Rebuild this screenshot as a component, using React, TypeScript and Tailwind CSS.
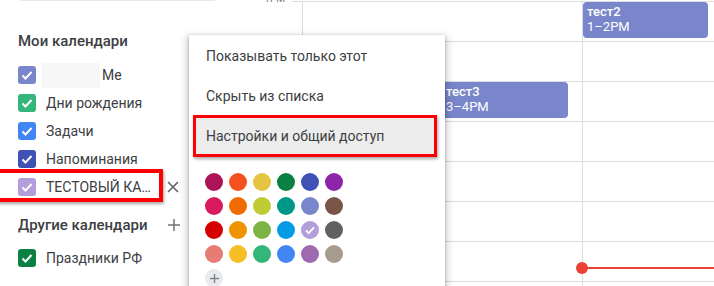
import React from "react";

const text = "text-[#3c4043]";

const Check = ({ className = "" }: { className?: string }) => (
  <svg viewBox="0 0 18 18" className={className}>
    <path d="M4.5 9.5l3 3 6-6.5" fill="none" stroke="#fff" strokeWidth="2" />
  </svg>
);

const CalBox = ({ color }: { color: string }) => (
  <div className={`w-[18px] h-[18px] rounded-[3px] flex items-center justify-center ${color}`}>
    <Check className="w-[18px] h-[18px]" />
  </div>
);

const CalRow = ({ color, children }: { color: string; children: React.ReactNode }) => (
  <div className="flex items-center h-[28px]">
    <CalBox color={color} />
    {children}
  </div>
);

const palette = [
  ["bg-[#ad1457]", "bg-[#f4511e]", "bg-[#e4c441]", "bg-[#0b8043]", "bg-[#3f51b5]", "bg-[#8e24aa]"],
  ["bg-[#d81b60]", "bg-[#ef6c00]", "bg-[#c0ca33]", "bg-[#009688]", "bg-[#7986cb]", "bg-[#795548]"],
  ["bg-[#d50000]", "bg-[#f09300]", "bg-[#7cb342]", "bg-[#039be5]", "bg-[#b39ddb]", "bg-[#616161]"],
  ["bg-[#e67c73]", "bg-[#f6bf26]", "bg-[#33b679]", "bg-[#4285f4]", "bg-[#9e69af]", "bg-[#a79b8e]"],
];

const Sidebar = () => (
  <div className="w-[256px] shrink-0 font-['Roboto',sans-serif]">
    <div className="ml-[20px] w-[195px] h-px bg-[#e8e8e8]" />
    <div className="pl-[18px]">
      <div className={`mt-[30px] h-[20px] leading-[20px] text-[15px] font-medium ${text}`}>
        Мои календари
      </div>
      <div className="mt-[10px]">
        <CalRow color="bg-[#7986cb]">
          <div className="ml-[6px] w-[58px] h-[25px] bg-[#f7f7f7]" />
          <span className={`ml-[2px] text-[14px] ${text}`}>Me</span>
        </CalRow>
        <CalRow color="bg-[#33b679]">
          <span className={`ml-[10px] text-[14px] ${text}`}>Дни рождения</span>
        </CalRow>
        <CalRow color="bg-[#4285f4]">
          <span className={`ml-[10px] text-[14px] ${text}`}>Задачи</span>
        </CalRow>
        <CalRow color="bg-[#3f51b5]">
          <span className={`ml-[10px] text-[14px] ${text}`}>Напоминания</span>
        </CalRow>
        <CalRow color="bg-[#b39ddb]">
          <span className={`ml-[10px] w-[113px] text-[14px] whitespace-nowrap ${text}`}>ТЕСТОВЫЙ КА…</span>
          <svg viewBox="0 0 12 12" className="ml-[8px] w-[12px] h-[12px]">
            <path d="M1 1l10 10M11 1L1 11" stroke="#5f6368" strokeWidth="1.6" />
          </svg>
        </CalRow>
      </div>
      <div className="mt-[14px] h-[20px] flex items-center">
        <span className={`w-[150px] text-[15px] font-medium ${text}`}>Другие календари</span>
        <svg viewBox="0 0 12 12" className="w-[12px] h-[12px]">
          <path d="M6 0v12M0 6h12" stroke="#6f7478" strokeWidth="1.5" />
        </svg>
      </div>
      <div className="mt-[9px]">
        <CalRow color="bg-[#0b8043]">
          <span className={`ml-[10px] text-[14px] ${text}`}>Праздники РФ</span>
        </CalRow>
      </div>
    </div>
  </div>
);

const Grid = () => (
  <div className="flex-1 flex font-['Roboto',sans-serif]">
    <div className="w-[36px] shrink-0">
      <div className="-mt-[7px] pr-[7px] text-right text-[10px] leading-[12px] text-[#70757a]">1PM</div>
    </div>
    <div className="relative flex-1 mt-px flex flex-col">
      {Array.from({ length: 8 }).map((_, i) => (
        <div key={i} className="flex h-[40px] shrink-0 border-t border-[#dadce0]">
          <div className="w-[10px]" />
          <div className="w-[280px] border-l border-[#dadce0]" />
          <div className="flex-1 border-l border-[#dadce0]" />
        </div>
      ))}
      <div className="absolute left-[291px] top-[1px] w-[125px] h-[36px] rounded-[4px] bg-[#7986cb] pl-[4px] pt-[2px] text-white text-[13px] leading-[15px]">
        <div className="font-medium">тест2</div>
        <div>1–2PM</div>
      </div>
      <div className="absolute left-[149px] top-[81px] w-[127px] h-[36px] rounded-[4px] bg-[#7986cb] pl-[5px] pt-[2px] text-white text-[13px] leading-[15px]">
        <div className="font-medium">тест3</div>
        <div>3–4PM</div>
      </div>
      <div className="absolute left-[284px] top-[261px] w-[12px] h-[12px] rounded-full bg-[#ea4335]" />
      <div className="absolute left-[290px] right-0 top-[266px] h-[2px] bg-[#ea4335]" />
    </div>
  </div>
);

const Menu = () => (
  <div className="absolute left-[189px] top-[35px] w-[256px] h-[270px] bg-white pt-px shadow-[0_1px_3px_rgba(0,0,0,0.3),0_4px_8px_3px_rgba(0,0,0,0.15)] font-['Roboto',sans-serif]">
    <div className={`h-[40px] flex items-center pl-[17px] text-[14px] ${text}`}>Показывать только этот</div>
    <div className={`h-[40px] flex items-center pl-[17px] text-[14px] ${text}`}>Скрыть из списка</div>
    <div className="relative h-[40px] flex items-center pl-[17px]">
      <div className="absolute left-[4px] -top-[1px] w-[244px] h-[42px] border-[3px] border-[#ff0000] bg-[#ececec] shadow-[1px_2px_3px_rgba(0,0,0,0.35)]" />
      <span className={`relative text-[14px] ${text}`}>Настройки и общий доступ</span>
    </div>
    <div className="pt-[17px] pl-[16px] flex flex-col gap-[6px]">
      {palette.map((row, r) => (
        <div key={r} className="flex gap-[6px]">
          {row.map((c, i) => (
            <div key={i} className={`w-[18px] h-[18px] rounded-full flex items-center justify-center ${c}`}>
              {r === 2 && i === 4 && <Check className="w-[16px] h-[16px]" />}
            </div>
          ))}
        </div>
      ))}
      <div className="w-[18px] h-[18px] rounded-full bg-[#e8eaed] flex items-center justify-center">
        <svg viewBox="0 0 10 10" className="w-[9px] h-[9px]">
          <path d="M5 0v10M0 5h10" stroke="#80868b" strokeWidth="1.6" />
        </svg>
      </div>
    </div>
  </div>
);

export default function App() {
  return (
    <div className="relative w-[714px] h-[286px] overflow-hidden bg-white flex">
      <Sidebar />
      <Grid />
      <div className="absolute -left-[10px] top-[169px] w-[173px] h-[33px] border-[4px] border-[#ff0000] shadow-[1px_2px_3px_rgba(0,0,0,0.35)]" />
      <Menu />
    </div>
  );
}
